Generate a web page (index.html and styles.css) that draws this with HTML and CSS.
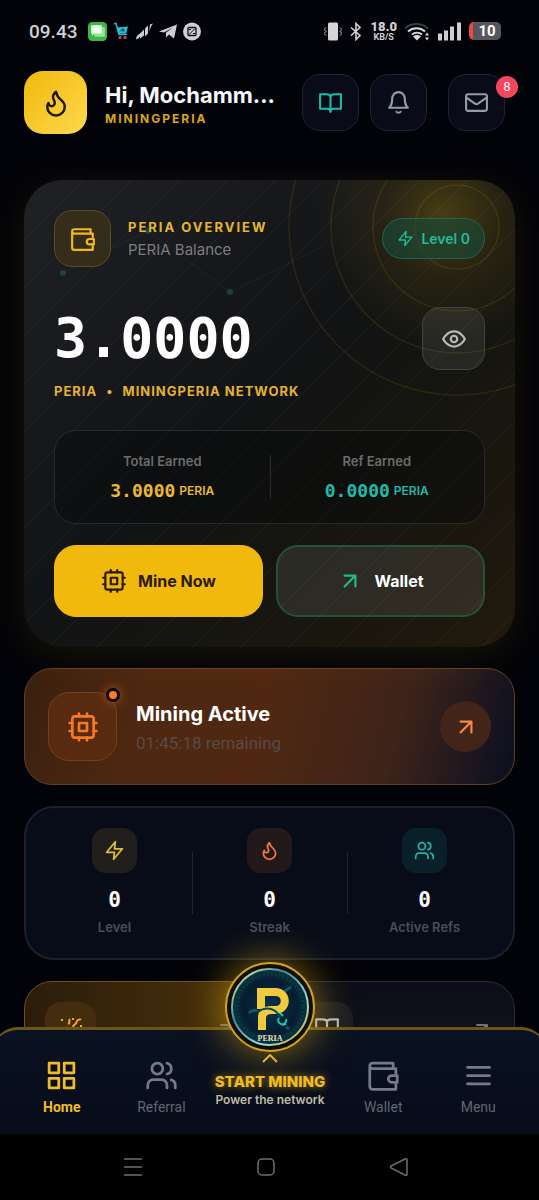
FILE: index.html
```html
<!DOCTYPE html>
<html lang="en">
<head>
    <meta charset="UTF-8">
    <meta name="viewport" content="width=device-width, initial-scale=1.0">
    <title>MiningPeria</title>
    <link rel="stylesheet" href="styles.css">
</head>
<body>
    <!-- shared icons -->
    <svg class="sprite" aria-hidden="true">
        <symbol id="i-flame" viewBox="0 0 24 24"><path d="M8.5 14.5A2.5 2.5 0 0 0 11 12c0-1.38-.5-2-1-3-1.072-2.143-.224-4.054 2-6 .5 2.5 2 4.9 4 6.5 2 1.6 3 3.5 3 5.5a7 7 0 1 1-14 0c0-1.153.433-2.294 1-3a2.500 2.500 0 0 0 2.500 2.500z"/></symbol>
        <symbol id="i-book" viewBox="0 0 24 24"><path d="M12 6v15M2 4h6q4 0 4 3 0-3 4-3h6v14h-7q-3 0-3 3 0-3-3-3H2z"/></symbol>
        <symbol id="i-bell" viewBox="0 0 24 24"><path d="M18 8A6 6 0 0 0 6 8c0 7-3 9-3 9h18s-3-2-3-9M10 21a2.500 2 0 0 0 4 0"/></symbol>
        <symbol id="i-mail" viewBox="0 0 24 24"><rect x="2" y="4" width="20" height="16" rx="2"/><path d="m2 7 8.500 6a2.600 2.600 0 0 0 3 0L22 7"/></symbol>
        <symbol id="i-wallet" viewBox="0 0 24 24"><path d="M19 7V3H4a2 2 0 0 0-2 2v15a2 2 0 0 0 2 2h17v-5M21 12V7H4a2 2 0 0 1-2-2"/><path d="M22 12h-4a2.500 2.500 0 0 0 0 5h4z"/></symbol>
        <symbol id="i-zap" viewBox="0 0 24 24"><path d="M13 2 3 14h9l-1 8 10-12h-9z"/></symbol>
        <symbol id="i-eye" viewBox="0 0 24 24"><path d="M2 12s3.500-7 10-7 10 7 10 7-3.500 7-10 7-10-7-10-7z"/><circle cx="12" cy="12" r="3"/></symbol>
        <symbol id="i-cpu" viewBox="0 0 24 24"><rect x="4" y="4" width="16" height="16" rx="2"/><path d="M9 9h6v6H9zM9 2v2M15 2v2M9 20v2M15 20v2M20 9h2M20 15h2M2 9h2M2 15h2"/></symbol>
        <symbol id="i-arrow" viewBox="0 0 24 24"><path d="M7 17 17 7M7 7h10v10"/></symbol>
        <symbol id="i-users" viewBox="0 0 24 24"><circle cx="9" cy="7" r="4"/><path d="M2 21v-2a4 4 0 0 1 4-4h6a4 4 0 0 1 4 4v2M16 3.100a4 4 0 0 1 0 7.800M22 21v-2a4 4 0 0 0-3-3.870"/></symbol>
        <symbol id="i-grid" viewBox="0 0 24 24"><path d="M3 3h7v7H3zM14 3h7v7h-7zM14 14h7v7h-7zM3 14h7v7H3z"/></symbol>
        <symbol id="i-menu" viewBox="0 0 24 24"><path d="M4 6h16M4 12h16M4 18h16"/></symbol>
    </svg>

    <div class="status-bar">
        <span class="clock">09.43</span>
        <svg width="19" height="19" viewBox="0 0 18 18"><rect width="18" height="18" rx="4" fill="#41b649"/><rect x="6" y="5" width="10" height="9" rx="1" fill="#9be29b"/><path d="M3 3h10v8H6l-2 2v-2H3z" fill="#eaffea"/></svg>
        <svg width="16" height="19" viewBox="0 0 16 18"><path d="M1 1h2l3 11h8" fill="none" stroke="#35b8c6" stroke-width="1.500"/><path d="m4 5 11-1-2 7H6z" fill="#25c8d8"/><path d="m7 9 3-3v3l2-2" fill="none" stroke="#123" stroke-width="1"/><circle cx="7" cy="15" r="1.500" fill="#e0475a"/><circle cx="12" cy="15" r="1.500" fill="#e0475a"/></svg>
        <svg width="18" height="19" viewBox="0 0 18 18"><path d="M1 17q0-4 4-6v3q-1 2-4 3zM5 16v-5l4-4v6zM10 14V6l3-3v8zM14 9l1-7 3-1-2 3z" fill="#cfcfd3"/></svg>
        <svg width="18" height="19" viewBox="0 0 18 18"><path d="m0 9 18-7-3 14-5-4-3 3v-5l7-5-9 5z" fill="#cfcfd3"/></svg>
        <svg width="18" height="19" viewBox="0 0 18 18"><circle cx="9" cy="9" r="9" fill="#cfcfd3"/><rect x="5" y="5" width="8" height="8" rx="1" fill="none" stroke="#08090d" stroke-width="1.300"/><path d="m6 12 6-6M6 7h2M10 11h2" stroke="#08090d"/></svg>
        <div class="status-right">
            <svg width="18" height="19" viewBox="0 0 18 18"><rect x="4" y="0" width="10" height="18" rx="1.500" fill="#d5d5d5"/><path d="m2 5-2 2 2 2-2 2 2 2M16 5l2 2-2 2 2 2-2 2" fill="none" stroke="#d5d5d5"/></svg>
            <svg width="12" height="19" viewBox="0 0 12 18"><path d="m1 5 9 8-4 4V1l4 4-9 8" fill="none" stroke="#d5d5d5" stroke-width="1.600"/></svg>
            <div class="speed"><b>18.0</b><span>KB/S</span></div>
            <svg width="25" height="19" viewBox="0 0 25 18" fill="none"><path d="M0 6a17 17 0 0 1 23 0" stroke="#3b3c40" stroke-width="2"/><path d="M3 9a13 13 0 0 1 17 0M7 12a8 8 0 0 1 10 0" stroke="#d8d8d8" stroke-width="2"/><path d="m8 14 4 4 4-4a7 7 0 0 0-8 0zM20 13l2-3 2 3zM20 15l2 3 2-3z" fill="#d8d8d8"/></svg>
            <svg width="23" height="19" viewBox="0 0 23 18"><path d="M0 11h4v7H0zM6 8h4v10H6zM12 4h4v14h-4zM19 0h4v18h-4z" fill="#cfcfcf"/></svg>
            <div class="battery">10</div>
        </div>
    </div>

    <header class="header">
        <div class="avatar"><svg class="icon" width="30" height="30"><use href="#i-flame"/></svg></div>
        <div class="greeting">
            <h1>Hi, Mochamm...</h1>
            <p>MININGPERIA</p>
        </div>
        <div class="header-actions">
            <button class="icon-btn teal" aria-label="Guide"><svg class="icon" width="25" height="25"><use href="#i-book"/></svg></button>
            <button class="icon-btn" aria-label="Notifications"><svg class="icon" width="25" height="25"><use href="#i-bell"/></svg></button>
            <button class="icon-btn mail" aria-label="Messages"><svg class="icon" width="25" height="25"><use href="#i-mail"/></svg><span class="badge">8</span></button>
        </div>
    </header>

    <main class="content">
        <section class="hero">
            <svg class="hero-rings" width="228" height="217" viewBox="0 123 228 217"><circle cx="170" cy="170" r="42"/><circle cx="170" cy="170" r="84"/><circle cx="170" cy="170" r="126"/><circle cx="170" cy="170" r="168"/></svg>
            <svg class="hero-net" width="300" height="130" viewBox="0 0 300 130"><path d="m39 93 85-42 82 61 94-46"/><circle cx="39" cy="93" r="3"/><circle cx="124" cy="51" r="3"/><circle cx="206" cy="112" r="3"/></svg>

            <div class="hero-top">
                <div class="hero-icon"><svg class="icon" width="26" height="26"><use href="#i-wallet"/></svg></div>
                <div class="hero-title">
                    <h2>PERIA OVERVIEW</h2>
                    <p>PERIA Balance</p>
                </div>
                <span class="level"><svg class="icon" width="17" height="17"><use href="#i-zap"/></svg>Level 0</span>
            </div>

            <div class="balance-row">
                <span class="balance">3.0000</span>
                <button class="eye-btn" aria-label="Hide balance"><svg class="icon" width="26" height="26"><use href="#i-eye"/></svg></button>
            </div>
            <p class="network">PERIA <span>•</span> MININGPERIA NETWORK</p>

            <div class="earned">
                <div class="earned-item">
                    <span class="label">Total Earned</span>
                    <p class="gold"><b>3.0000</b> PERIA</p>
                </div>
                <div class="earned-item">
                    <span class="label">Ref Earned</span>
                    <p class="teal"><b>0.0000</b> PERIA</p>
                </div>
            </div>

            <div class="hero-actions">
                <button class="btn btn-mine"><svg class="icon" width="26" height="26"><use href="#i-cpu"/></svg>Mine Now</button>
                <button class="btn btn-wallet"><svg class="icon" width="26" height="26"><use href="#i-arrow"/></svg>Wallet</button>
            </div>
        </section>

        <section class="mining">
            <div class="mining-icon"><svg class="icon" width="32" height="32"><use href="#i-cpu"/></svg><i class="pulse"></i></div>
            <div class="mining-text">
                <h2>Mining Active</h2>
                <p>01:45:18 remaining</p>
            </div>
            <button class="round-btn" aria-label="Open mining"><svg class="icon" width="26" height="26"><use href="#i-arrow"/></svg></button>
        </section>

        <section class="stats">
            <div class="stat yellow">
                <div class="stat-icon"><svg class="icon" width="21" height="21"><use href="#i-zap"/></svg></div>
                <b>0</b>
                <span>Level</span>
            </div>
            <div class="stat orange">
                <div class="stat-icon"><svg class="icon" width="21" height="21"><use href="#i-flame"/></svg></div>
                <b>0</b>
                <span>Streak</span>
            </div>
            <div class="stat aqua">
                <div class="stat-icon"><svg class="icon" width="21" height="21"><use href="#i-users"/></svg></div>
                <b>0</b>
                <span>Active Refs</span>
            </div>
        </section>

        <section class="shortcuts">
            <a href="#" class="shortcut shortcut-gold" aria-label="Rewards">
                <div class="shortcut-icon"><svg width="24" height="24" viewBox="0 0 24 24" fill="none" stroke="#f5a623" stroke-width="2"><path d="m4 21 4-9 7 7zM9 8c3-1 0-3 2-5M14 11c1-4 3-1 4-6 1-2 3-1 4-2M2 4h2M13 3h2M21 10h2M16 14c2-2 3 0 5 0"/></svg></div>
                <svg class="icon" width="20" height="20"><use href="#i-arrow"/></svg>
            </a>
            <a href="#" class="shortcut" aria-label="Guide">
                <div class="shortcut-icon"><svg class="icon" width="26" height="26"><use href="#i-book"/></svg></div>
                <svg class="icon" width="20" height="20"><use href="#i-arrow"/></svg>
            </a>
        </section>
    </main>

    <nav class="tabbar">
        <a href="#" class="tab active"><svg class="icon" width="33" height="33"><use href="#i-grid"/></svg>Home</a>
        <a href="#" class="tab"><svg class="icon" width="33" height="33"><use href="#i-users"/></svg>Referral</a>
        <a href="#" class="start">
            <span class="orb">
                <svg width="80" height="80" viewBox="0 0 80 80">
                    <defs>
                        <radialGradient id="coin"><stop offset="0" stop-color="#0b3150"/><stop offset=".7" stop-color="#071d30"/><stop offset="1" stop-color="#06343c"/></radialGradient>
                        <linearGradient id="rim" x1="0" y1="0" x2="1" y2="1"><stop offset="0" stop-color="#fff0a0"/><stop offset=".35" stop-color="#3a91a0"/><stop offset=".7" stop-color="#9fdde0"/><stop offset="1" stop-color="#d9a514"/></linearGradient>
                    </defs>
                    <circle cx="40" cy="40" r="38" fill="url(#coin)" stroke="url(#rim)" stroke-width="2"/>
                    <circle cx="40" cy="40" r="33" fill="none" stroke="#14435a" stroke-width="4" stroke-dasharray="2 2" opacity=".5"/>
                    <path d="M19 46q4-4 8-2M52 26l9-6M56 60l3 2" stroke="#128f96" stroke-width="3" fill="none" opacity=".5"/>
                    <path d="M31 42V25h14c13 0 13 18 0 18h-3c-7 0-10 3-10 8v12" fill="none" stroke="#f0cb3c" stroke-width="8"/>
                    <path d="M28 45q6-5 13-3t9 9" fill="none" stroke="#0a4957" stroke-width="2"/>
                    <path d="M49 51a4 4 0 1 0 7 1M56 57l-4 1M50 46l3 3" fill="none" stroke="#22c4a0" stroke-width="2"/>
                    <text x="40" y="74" text-anchor="middle" class="coin-text">PERIA</text>
                </svg>
            </span>
            <svg class="chevron" width="16" height="9" viewBox="0 0 16 9"><path d="m1 8 7-7 7 7"/></svg>
            <strong>START MINING</strong>
            <small>Power the network</small>
        </a>
        <a href="#" class="tab"><svg class="icon" width="33" height="33"><use href="#i-wallet"/></svg>Wallet</a>
        <a href="#" class="tab"><svg class="icon" width="33" height="33"><use href="#i-menu"/></svg>Menu</a>
    </nav>

    <div class="system-nav">
        <svg width="20" height="20" viewBox="0 0 20 20"><path d="M1 2h18M1 10h18M1 18h18"/></svg>
        <svg width="20" height="20" viewBox="0 0 20 20"><rect x="2" y="2" width="16" height="16" rx="4"/></svg>
        <svg width="20" height="20" viewBox="0 0 20 20"><path d="M18 3v14q0 2-2 1L2 11q-1-1 0-2l14-7q2-1 2 1z"/></svg>
    </div>
</body>
</html>
```
FILE: styles.css
```css
* {
    box-sizing: border-box;
    margin: 0;
    padding: 0;
}
body {
    height: 100vh;
    display: flex;
    flex-direction: column;
    overflow: hidden;
    background: #020308;
    color: #fff;
    font-family: Inter, "Liberation Sans", sans-serif;
}
button {
    font-family: inherit;
    color: inherit;
    cursor: pointer;
}
a {
    color: inherit;
    text-decoration: none;
}
.sprite {
    display: none;
}
.icon {
    flex: none;
    fill: none;
    stroke: currentColor;
    stroke-width: 2;
    stroke-linecap: round;
    stroke-linejoin: round;
}

/* status bar */
.status-bar {
    flex: none;
    display: flex;
    align-items: center;
    gap: 6px;
    height: 62px;
    padding: 0 38px 0 29px;
    font-family: Roboto, sans-serif;
    color: #d0d0d3;
}
.clock {
    margin-right: 5px;
    font-size: 19px;
    font-weight: 500;
}
.status-right {
    display: flex;
    align-items: center;
    gap: 8px;
    margin-left: auto;
}
.speed {
    text-align: center;
    font-size: 9px;
    font-weight: 700;
}
.speed b {
    display: block;
    font-size: 13px;
    line-height: 13px;
}
.speed span {
    display: block;
    line-height: 9px;
}
.battery {
    width: 32px;
    height: 18px;
    border-left: 4px solid #e8483f;
    border-radius: 5px;
    background: #56575b;
    color: #fff;
    font-size: 15px;
    font-weight: 700;
    line-height: 18px;
    text-align: center;
}

/* header */
.header {
    flex: none;
    display: flex;
    align-items: center;
    padding: 9px 34px 0 24px;
}
.avatar {
    display: flex;
    align-items: center;
    justify-content: center;
    width: 63px;
    height: 63px;
    margin-right: 18px;
    border-radius: 19px;
    background: linear-gradient(135deg, #f0b90b, #ffd84f);
    color: #22190a;
}
.greeting {
    flex: 1;
    padding-top: 4px;
    white-space: nowrap;
}
.greeting h1 {
    font-size: 22px;
    font-weight: 700;
    line-height: 28px;
    color: #f8f8fc;
}
.greeting p {
    font-size: 12px;
    font-weight: 700;
    line-height: 20px;
    letter-spacing: 2px;
    color: #dba51a;
}
.header-actions {
    display: flex;
    gap: 11px;
}
.icon-btn {
    position: relative;
    display: flex;
    align-items: center;
    justify-content: center;
    width: 57px;
    height: 57px;
    border: 1px solid #1e2532;
    border-radius: 18px;
    background: #090c18;
    color: #949baa;
}
.icon-btn.teal {
    color: #1db9a9;
}
.icon-btn.mail {
    margin-left: 10px;
}
.badge {
    position: absolute;
    top: 1px;
    right: -14px;
    width: 22px;
    height: 22px;
    border-radius: 50%;
    background: #f6465d;
    color: #fff;
    font-size: 12px;
    line-height: 22px;
}

/* content */
.content {
    flex: 1;
    min-height: 0;
    overflow: hidden;
    display: flex;
    flex-direction: column;
    gap: 21px;
    padding: 46px 24px 0;
}
.content > * {
    flex: none;
}
.hero {
    position: relative;
    padding: 30px;
    border-radius: 38px;
    background:
        repeating-linear-gradient(135deg, transparent 0 7px, rgba(255,255,255,0.04) 8px, transparent 9px 34px),
        radial-gradient(circle at right 72px top 36px, rgba(240,185,11,0.25), rgba(240,185,11,0.09) 60px, transparent 130px),
        linear-gradient(135deg, #202125 0%, #111315 45%, #151510 65%, #21190c 100%);
    box-shadow: 0 8px 40px rgba(240,185,11,0.1);
}
.hero > * {
    position: relative;
}
.hero .hero-rings,
.hero .hero-net {
    position: absolute;
    fill: none;
    pointer-events: none;
}
.hero .hero-rings {
    top: 0;
    right: 0;
    stroke: rgba(240,185,11,0.11);
    stroke-width: 1.5;
}
.hero .hero-net {
    top: 0;
    left: 0;
}
.hero-net path {
    stroke: rgba(255,255,255,0.05);
}
.hero-net circle {
    fill: rgba(29,185,169,0.25);
}
.hero-top {
    display: flex;
    align-items: center;
}
.hero-icon {
    display: flex;
    align-items: center;
    justify-content: center;
    width: 57px;
    height: 57px;
    margin-right: 17px;
    border: 1px solid #5c4d1d;
    border-radius: 18px;
    background: #352d19;
    color: #f0b920;
}
.hero-title {
    flex: 1;
    white-space: nowrap;
}
.hero-title h2 {
    font-size: 13px;
    line-height: 22px;
    letter-spacing: 2px;
    color: #e6b830;
}
.hero-title p {
    font-size: 15px;
    line-height: 24px;
    color: #7c7c7e;
}
.level {
    display: flex;
    align-items: center;
    gap: 7px;
    height: 41px;
    padding: 0 14px;
    border: 1px solid #236352;
    border-radius: 21px;
    background: rgba(24,72,54,0.65);
    color: #22b99c;
    font-size: 14px;
    font-weight: 600;
}
.balance-row {
    display: flex;
    align-items: center;
    justify-content: space-between;
    margin-top: 40px;
}
.balance {
    font-family: "DejaVu Sans Mono", monospace;
    font-size: 55px;
    font-weight: 700;
    line-height: 63px;
}
.eye-btn {
    display: flex;
    align-items: center;
    justify-content: center;
    width: 63px;
    height: 63px;
    border: 1px solid #42423e;
    border-radius: 18px;
    background: rgba(255,255,255,0.08);
    color: #b9b9b7;
}
.network {
    margin-top: 11px;
    font-size: 13px;
    font-weight: 700;
    line-height: 20px;
    letter-spacing: 1px;
    color: #e3b331;
}
.network span {
    margin: 0 5px;
}
.earned {
    display: grid;
    grid-template-columns: 1fr 1fr;
    margin-top: 29px;
    padding: 20px 0;
    border: 1px solid #292a29;
    border-radius: 22px;
    background: rgba(8,9,10,0.5);
    text-align: center;
}
.earned-item {
    height: 52px;
}
.earned-item + .earned-item {
    background: linear-gradient(#2b2b29, #2b2b29) left center / 1px 44px no-repeat;
}
.label {
    display: block;
    font-size: 13px;
    font-weight: 600;
    line-height: 20px;
    color: #6b6b6b;
}
.earned p {
    display: flex;
    align-items: center;
    justify-content: center;
    gap: 4px;
    height: 38px;
    font-size: 12px;
    font-weight: 600;
}
.earned b {
    font-family: "DejaVu Sans Mono", monospace;
    font-size: 18px;
}
.gold {
    color: #eab836;
}
.teal {
    color: #22b9aa;
}
.hero-actions {
    display: grid;
    grid-template-columns: 1fr 1fr;
    gap: 13px;
    margin-top: 21px;
}
.btn {
    display: flex;
    align-items: center;
    justify-content: center;
    gap: 11px;
    height: 72px;
    border: 1px solid #f0b90b;
    border-radius: 22px;
    font-size: 16px;
    font-weight: 700;
}
.btn-mine {
    background: #f0b90b;
    color: #2b1a0a;
}
.btn-wallet {
    border: 2px solid #245239;
    background: rgba(255,255,255,0.09);
}
.btn-wallet .icon {
    color: #1fbd7c;
}

/* mining card */
.mining {
    display: flex;
    align-items: center;
    height: 117px;
    padding: 0 23px;
    border: 1px solid #6c3c22;
    border-radius: 28px;
    background: linear-gradient(105deg, #3a200f 0%, #4e2811 25%, #502812 48%, #3d2319 75%, #0e1021 98%);
}
.mining-icon {
    position: relative;
    display: flex;
    align-items: center;
    justify-content: center;
    width: 69px;
    height: 69px;
    margin-right: 19px;
    border: 1px solid #73401f;
    border-radius: 21px;
    background: #582b11;
    color: #f57a22;
}
.pulse {
    position: absolute;
    top: -5px;
    right: -4px;
    width: 14px;
    height: 14px;
    border: 3px solid #0b0708;
    border-radius: 50%;
    background: #ff7a24;
    box-shadow: 0 0 12px rgba(255,122,36,0.6);
}
.mining-text {
    flex: 1;
    padding-top: 3px;
}
.mining-text h2 {
    font-size: 20px;
    line-height: 30px;
}
.mining-text p {
    font-family: Roboto, sans-serif;
    font-size: 17px;
    line-height: 28px;
    color: #5a4a46;
}
.round-btn {
    display: flex;
    align-items: center;
    justify-content: center;
    width: 51px;
    height: 51px;
    border: 0;
    border-radius: 50%;
    background: #422518;
    color: #f98642;
}

/* stats */
.stats {
    display: grid;
    grid-template-columns: repeat(3, 1fr);
    padding: 20px 11px;
    border: 2px solid #1a202d;
    border-radius: 30px;
    background: #080c19;
}
.stat {
    display: flex;
    flex-direction: column;
    align-items: center;
}
.stat + .stat {
    background: linear-gradient(#1e2430, #1e2430) left center / 1px 62px no-repeat;
}
.stat-icon {
    display: flex;
    align-items: center;
    justify-content: center;
    width: 45px;
    height: 45px;
    border-radius: 14px;
}
.stat b {
    margin-top: 13px;
    font-family: "DejaVu Sans Mono", monospace;
    font-size: 21px;
    line-height: 28px;
}
.stat span {
    margin-top: 2px;
    font-size: 13px;
    font-weight: 600;
    line-height: 22px;
    color: #484c58;
}
.yellow .stat-icon {
    background: #211f1b;
    color: #e2c02d;
}
.orange .stat-icon {
    background: #22191b;
    color: #ed7a37;
}
.aqua .stat-icon {
    background: #09202b;
    color: #26b3a7;
}

/* shortcuts */
.shortcuts {
    display: grid;
    grid-template-columns: 1fr 1fr;
    gap: 22px;
}
.shortcut {
    display: flex;
    justify-content: space-between;
    height: 120px;
    padding: 20px;
    border: 1px solid #292b35;
    border-radius: 28px;
    background: linear-gradient(#0b0d18, #17171a);
    color: #70727a;
}
.shortcut > .icon {
    margin-top: 36px;
}
.shortcut-icon {
    display: flex;
    align-items: center;
    justify-content: center;
    width: 51px;
    height: 51px;
    border-radius: 16px;
    background: #1c1d23;
    color: #b5b5b5;
}
.shortcut > .icon {
    width: 24px;
    height: 24px;
    margin-top: 16px;
}
.shortcut-gold {
    border-color: #725015;
    background: linear-gradient(90deg, #2b1c0b, #4b330a);
}
.shortcut-gold .shortcut-icon {
    background: #422d0f;
}

/* bottom tabs */
.tabbar {
    position: relative;
    flex: none;
    display: grid;
    grid-template-columns: 11fr 11fr 13fr 12fr 9fr;
    height: 107px;
    margin: 0 -8px;
    padding: 0 28px 0 20px;
    border-top: 3px solid #6b5618;
    border-radius: 26px 26px 0 0;
    background: linear-gradient(#0a1120, #060c1a);
}
.tab {
    display: flex;
    flex-direction: column;
    align-items: center;
    padding-top: 29px;
    font-family: Roboto, sans-serif;
    font-size: 14px;
    line-height: 30px;
    color: #5f6571;
}
.tab .icon {
    color: #747a86;
}
.tab.active,
.tab.active .icon {
    color: #f0bb25;
    font-weight: 700;
}
.start {
    display: flex;
    flex-direction: column;
    align-items: center;
    margin-top: -68px;
    white-space: nowrap;
}
.orb {
    display: flex;
    align-items: center;
    justify-content: center;
    flex: none;
    width: 90px;
    height: 90px;
    border: 2px solid #cda220;
    border-radius: 50%;
    background: #120e07;
    box-shadow: 0 0 40px rgba(240,185,11,0.6);
}
.coin-text {
    fill: #e9e2bb;
    font-family: "Liberation Serif", serif;
    font-size: 8px;
    font-weight: 700;
}
.chevron {
    flex: none;
    margin-top: 2px;
    fill: none;
    stroke: #e3b52b;
    stroke-width: 2;
}
.start strong {
    margin-top: 9px;
    font-size: 15px;
    font-weight: 800;
    line-height: 20px;
    color: #f0bb20;
    text-shadow: 0 0 8px rgba(240,185,11,0.7);
}
.start small {
    font-size: 12px;
    font-weight: 600;
    line-height: 16px;
    color: #c0bba5;
}

/* system navigation */
.system-nav {
    position: relative;
    flex: none;
    display: flex;
    align-items: center;
    justify-content: center;
    gap: 113px;
    height: 66px;
    padding-right: 8px;
    background: #000;
}
.system-nav svg {
    fill: none;
    stroke: #6d6e70;
    stroke-width: 1.5;
}
```
